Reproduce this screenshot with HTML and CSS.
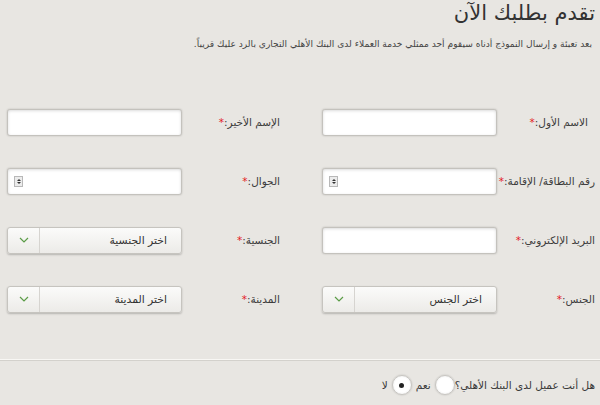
FILE: index.html
```html
<!DOCTYPE html>
<html lang="ar" dir="rtl">
<head>
<meta charset="utf-8">
<link rel="stylesheet" href="styles.css">
</head>
<body>
<div class="page">
  <h1 class="title">تقدم بطلبك الآن</h1>
  <p class="intro">بعد تعبئة و إرسال النموذج أدناه سيقوم أحد ممثلي خدمة العملاء لدى البنك الأهلي التجاري بالرد عليك قريباً.</p>

  <div class="form-grid">
    <div class="field">
      <label class="label label-first">الاسم الأول:<span class="req">*</span></label>
      <div class="input"></div>
    </div>
    <div class="field">
      <label class="label">الإسم الأخير:<span class="req">*</span></label>
      <div class="input"></div>
    </div>

    <div class="field">
      <label class="label">رقم البطاقة/ الإقامة:<span class="req">*</span></label>
      <div class="input number"><span class="spin"><span class="up"></span><span class="down"></span></span></div>
    </div>
    <div class="field">
      <label class="label">الجوال:<span class="req">*</span></label>
      <div class="input number"><span class="spin"><span class="up"></span><span class="down"></span></span></div>
    </div>

    <div class="field">
      <label class="label">البريد الإلكتروني:<span class="req">*</span></label>
      <div class="input"></div>
    </div>
    <div class="field">
      <label class="label">الجنسية:<span class="req">*</span></label>
      <div class="select"><span class="sel-text">اختر الجنسية</span><span class="sel-btn"><svg width="10" height="6" viewBox="0 0 10 6"><polyline points="1,1 5,5 9,1" fill="none" stroke="#5b9c47" stroke-width="1.2"/></svg></span></div>
    </div>

    <div class="field">
      <label class="label">الجنس:<span class="req">*</span></label>
      <div class="select"><span class="sel-text">اختر الجنس</span><span class="sel-btn"><svg width="10" height="6" viewBox="0 0 10 6"><polyline points="1,1 5,5 9,1" fill="none" stroke="#5b9c47" stroke-width="1.2"/></svg></span></div>
    </div>
    <div class="field">
      <label class="label">المدينة:<span class="req">*</span></label>
      <div class="select"><span class="sel-text">اختر المدينة</span><span class="sel-btn"><svg width="10" height="6" viewBox="0 0 10 6"><polyline points="1,1 5,5 9,1" fill="none" stroke="#5b9c47" stroke-width="1.2"/></svg></span></div>
    </div>
  </div>

  <div class="divider"></div>

  <div class="radio-row">
    <span class="q">هل أنت عميل لدى البنك الأهلي؟</span>
    <span class="radio"></span>
    <span class="opt">نعم</span>
    <span class="radio checked"></span>
    <span class="opt">لا</span>
  </div>
</div>
</body>
</html>
```

FILE: styles.css
```css
html, body {
  margin: 0;
  padding: 0;
  background: #e8e6e2;
}
body {
  font-family: "DejaVu Sans", sans-serif;
  color: #3a3a3a;
  width: 600px;
  height: 405px;
  overflow: hidden;
}
.page {
  display: flex;
  flex-direction: column;
}
.title {
  margin: 0;
  padding: 0 5px 0 0;
  font-size: 21px;
  font-weight: normal;
  line-height: 26px;
  color: #333;
}
.intro {
  margin: 10px 0 0;
  padding: 0 8px 0 0;
  font-size: 9.1px;
  line-height: 16px;
  color: #444;
}
.form-grid {
  display: grid;
  grid-template-columns: 285px 285px;
  column-gap: 30px;
  row-gap: 33px;
  margin-top: 57px;
}
.field {
  display: flex;
  align-items: center;
  padding: 0 5px 0 7px;
  height: 26px;
}
.label {
  width: 98px;
  font-size: 10.5px;
  color: #3c3c3c;
  white-space: nowrap;
}
.label-first {
  padding-right: 7px;
  box-sizing: border-box;
}
.req {
  color: #e3201b;
}
.input {
  box-sizing: border-box;
  width: 175px;
  height: 27px;
  background: #fff;
  border: 1px solid #c4c2bd;
  border-radius: 3px;
  box-shadow: 0 0 2px rgba(0,0,0,0.2), inset 0 1px 3px rgba(0,0,0,0.14);
  display: flex;
  align-items: center;
  direction: ltr;
}
.spin {
  margin-left: 6px;
  width: 7px;
  height: 9px;
  border: 1px solid #b8b8b8;
  background: #ececec;
  display: flex;
  flex-direction: column;
  align-items: center;
  justify-content: center;
  gap: 1px;
}
.up {
  width: 0; height: 0;
  border-left: 2px solid transparent;
  border-right: 2px solid transparent;
  border-bottom: 2px solid #333;
}
.down {
  width: 0; height: 0;
  border-left: 2px solid transparent;
  border-right: 2px solid transparent;
  border-top: 2px solid #333;
}
.select {
  box-sizing: border-box;
  width: 175px;
  height: 27px;
  border: 1px solid #c6c4bf;
  border-radius: 3px;
  background: linear-gradient(#fbfbfa, #ecebe8);
  box-shadow: 0 1px 2px rgba(0,0,0,0.22);
  display: flex;
  align-items: stretch;
}
.sel-text {
  flex: 1;
  display: flex;
  align-items: center;
  padding-right: 14px;
  font-size: 10.8px;
  color: #333;
}
.sel-btn {
  width: 31px;
  border-right: 1px solid #d6d4d0;
  display: flex;
  align-items: center;
  justify-content: center;
}
.divider {
  margin-top: 47px;
  height: 0;
  border-top: 1px solid #f8f7f4;
  border-bottom: 1px solid #d3d1cc;
}
.radio-row {
  display: flex;
  align-items: center;
  margin-top: 14px;
  padding-right: 5px;
  font-size: 10.5px;
  color: #3a3a3a;
}
.radio {
  box-sizing: border-box;
  width: 20px;
  height: 20px;
  border-radius: 50%;
  background: radial-gradient(circle at 50% 50%, #fff 55%, #e6e6e6 100%);
  border: 1px solid #c8c6c2;
  box-shadow: 0 0 2px rgba(0,0,0,0.2);
  display: flex;
  align-items: center;
  justify-content: center;
}
.radio.checked::after {
  content: "";
  width: 5px;
  height: 5px;
  border-radius: 50%;
  background: #222;
}
.opt { margin: 0 4px; }
```
